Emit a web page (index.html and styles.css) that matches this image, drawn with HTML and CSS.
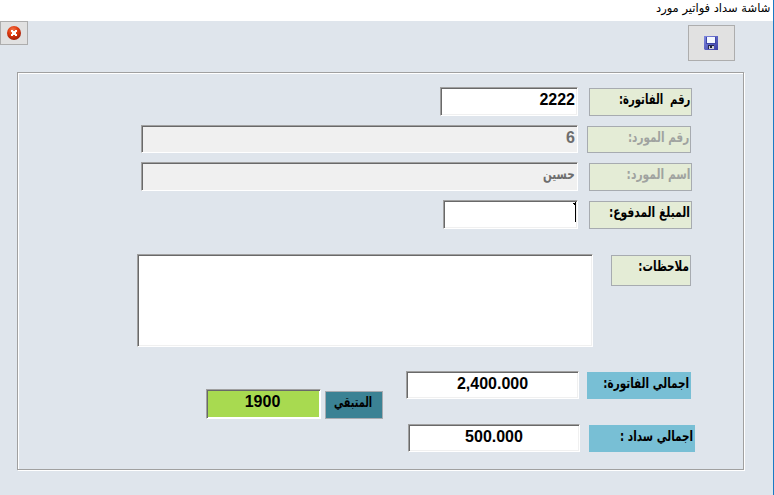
FILE: index.html
```html
<!DOCTYPE html>
<html lang="ar" dir="rtl">
<head>
    <meta charset="UTF-8">
    <title>شاشة سداد فواتير مورد</title>
    <link rel="stylesheet" href="styles.css">
</head>
<body>
    <div class="window">
        <header class="titlebar"><span class="t-title">شاشة سداد فواتير مورد</span></header>

        <div class="toolbar">
            <button class="btn btn-save" title="حفظ">
                <svg width="14" height="14" viewBox="0 0 14 14">
                    <defs>
                        <linearGradient id="disk" x1="0" y1="0" x2="1" y2="1">
                            <stop offset="0" stop-color="#7f88e0"/>
                            <stop offset="1" stop-color="#3a3da4"/>
                        </linearGradient>
                    </defs>
                    <path d="M0 0H14V14H1L0 13Z" fill="url(#disk)"/>
                    <path d="M2 1H12V8H2Z" fill="#3f47a8"/>
                    <path d="M3 1H11V7H3Z" fill="#f4f8ff"/>
                    <path d="M4 9H10V13H4Z" fill="#24264f"/>
                    <path d="M5 10H10V13H5Z" fill="#cfd0d4"/>
                    <path d="M6 10H8V12H6Z" fill="#202238"/>
                </svg>
            </button>
            <button class="btn btn-close" title="اغلاق">
                <svg width="14" height="14" viewBox="0 0 14 14">
                    <defs>
                        <radialGradient id="ball" cx=".42" cy=".3" r=".7">
                            <stop offset="0" stop-color="#f47a50"/>
                            <stop offset=".5" stop-color="#e03c10"/>
                            <stop offset="1" stop-color="#a01c08"/>
                        </radialGradient>
                    </defs>
                    <circle cx="7" cy="7" r="7" fill="url(#ball)"/>
                    <path d="M4 4H6V5H8V4H10V6H9V8H10V10H8V9H6V10H4V8H5V6H4Z" fill="#fff"/>
                </svg>
            </button>
        </div>

        <main class="panel">
            <div class="row row-invoice">
                <div class="label"><span class="t-invoice">رقم&nbsp; الفاتورة:</span></div>
                <div class="field">2222</div>
            </div>
            <div class="row row-supplier-no">
                <div class="label disabled"><span class="t-supplier-no">رقم المورد:</span></div>
                <div class="field disabled">6</div>
            </div>
            <div class="row row-supplier-name">
                <div class="label disabled"><span class="t-supplier-name">اسم المورد:</span></div>
                <div class="field disabled"><span class="t-name">حسين</span></div>
            </div>
            <div class="row row-amount">
                <div class="label"><span class="t-amount">المبلغ المدفوع:</span></div>
                <div class="field">
                    <svg class="caret" width="3" height="20" viewBox="0 0 3 20"><path d="M2 0H3V20H2V3H1V2H0V1H2Z"/></svg>
                </div>
            </div>
            <div class="row row-notes">
                <div class="label"><span class="t-notes">ملاحظات:</span></div>
                <div class="field"></div>
            </div>

            <div class="totals">
                <div class="sums">
                    <div class="row row-total">
                        <div class="label blue"><span class="t-total">اجمالي الفاتورة:</span></div>
                        <div class="field center">2,400.000</div>
                    </div>
                    <div class="row row-paid">
                        <div class="label blue"><span class="t-paid">اجمالي سداد :</span></div>
                        <div class="field center">500.000</div>
                    </div>
                </div>
                <div class="row row-rest">
                    <div class="label teal"><span class="t-rest">المتبقي</span></div>
                    <div class="field center green">1900</div>
                </div>
            </div>
        </main>
    </div>
</body>
</html>
```

FILE: styles.css
```css
* {
    box-sizing: border-box;
}

body {
    margin: 0;
    background: #dfe5ec;
    color: #000;
    font: bold 16px/18px "Liberation Sans", "DejaVu Sans", sans-serif;
}

.window {
    width: 774px;
    height: 495px;
    border-right: 1px solid #1a7bc4;
    overflow: hidden;
}

.titlebar {
    height: 21px;
    padding-right: 3px;
    background: #fff;
    font: 12px/17px "DejaVu Sans", sans-serif;
}

.toolbar {
    display: flex;
    justify-content: space-between;
    align-items: flex-start;
    height: 51px;
    padding-right: 38px;
}

.btn {
    display: flex;
    align-items: center;
    justify-content: center;
    padding: 0;
    border: 1px solid #adadad;
    background: #e1e1e1;
}

.btn-save {
    width: 47px;
    height: 36px;
    margin-top: 4px;
    padding-right: 1px;
}

.btn-close {
    width: 28px;
    height: 24px;
}

/* etched frame */
.panel {
    width: 727px;
    height: 398px;
    margin-right: 29px;
    padding: 14px 48px 0 0;
    border: 1px solid #a0a0a0;
    box-shadow: 1px 1px 0 #fff, inset 1px 1px 0 #fff;
}

.row {
    display: flex;
}

.label {
    width: 103px;
    height: 28px;
    margin-top: 1px;
    padding-right: 1px;
    border: 1px solid #a7abb0;
    background: #e4ecd6;
    font: bold 14px/20px "DejaVu Sans", sans-serif;
    white-space: nowrap;
}

/* condensed captions */
.label span,
.field span,
.titlebar span {
    display: inline-block;
    transform: scaleX(.745);
    transform-origin: right center;
}

.titlebar .t-title {
    transform: scaleX(.958);
}

.label .t-invoice {
    transform: scaleX(.717);
}

.label .t-supplier-name,
.label .t-amount {
    transform: scaleX(.765);
}

.label .t-rest {
    transform: scaleX(.69);
}

.field .t-name {
    font: bold 14px/16px "DejaVu Sans", sans-serif;
}

.label.disabled {
    color: #a0a3a0;
}

.label.blue {
    padding: 1px 2px 0 0;
    border: 0;
    background: #78bfd5;
}

.label.teal {
    background: #3b8294;
}

.field {
    height: 29px;
    padding: 3px 2px 0;
    border: 1px solid #a0a0a0;
    border-right-color: #fff;
    border-bottom-color: #fff;
    box-shadow: inset 1px 1px 0 #696969, inset -1px -1px 0 #f0f0f0;
    background-color: #fff;
}

.field.disabled {
    background-color: #f0f0f0;
    color: #6d6d6d;
}

.field.center {
    text-align: center;
}

.field.green {
    padding-right: 4px;
    background-color: #a8da50;
    box-shadow: inset 1px 1px 0 #696969, inset -1px -1px 0 #fff;
}

.caret {
    display: block;
    margin: -2px -1px 0 0;
}

.row-invoice {
    margin: 0 3px 9px 0;
    gap: 11px;
}

.row-invoice .field {
    width: 138px;
}

.row-supplier-no {
    margin: 0 4px 9px 0;
    gap: 9px;
}

.row-supplier-no .label {
    width: 104px;
    height: 27px;
}

.row-supplier-no .field {
    width: 437px;
    height: 28px;
}

.row-supplier-name {
    margin: 0 3px 9px 0;
    gap: 11px;
}

.row-supplier-name .field {
    width: 437px;
    padding-top: 2px;
}

.row-amount {
    margin: 0 3px 25px 0;
    gap: 11px;
}

.row-amount .field {
    width: 135px;
}

.row-notes {
    margin: 0 4px 24px 0;
    gap: 18px;
}

.row-notes .label {
    width: 80px;
    height: 31px;
}

.row-notes .field {
    width: 456px;
    height: 93px;
}

.totals {
    display: flex;
    gap: 23px;
}

.row-total {
    margin: 0 4px 25px 0;
    gap: 8px;
}

.row-total .label {
    width: 104px;
    height: 27px;
}

.row-total .field {
    width: 173px;
    height: 28px;
}

.row-paid {
    gap: 9px;
}

.row-paid .label {
    width: 106px;
    height: 27px;
}

.row-paid .field {
    width: 172px;
    height: 28px;
}

.row-rest {
    margin-top: 18px;
    gap: 4px;
}

.row-rest .label {
    width: 58px;
    height: 28px;
    margin-top: 2px;
    padding-right: 10px;
}

.row-rest .field {
    width: 115px;
    height: 30px;
}
```
